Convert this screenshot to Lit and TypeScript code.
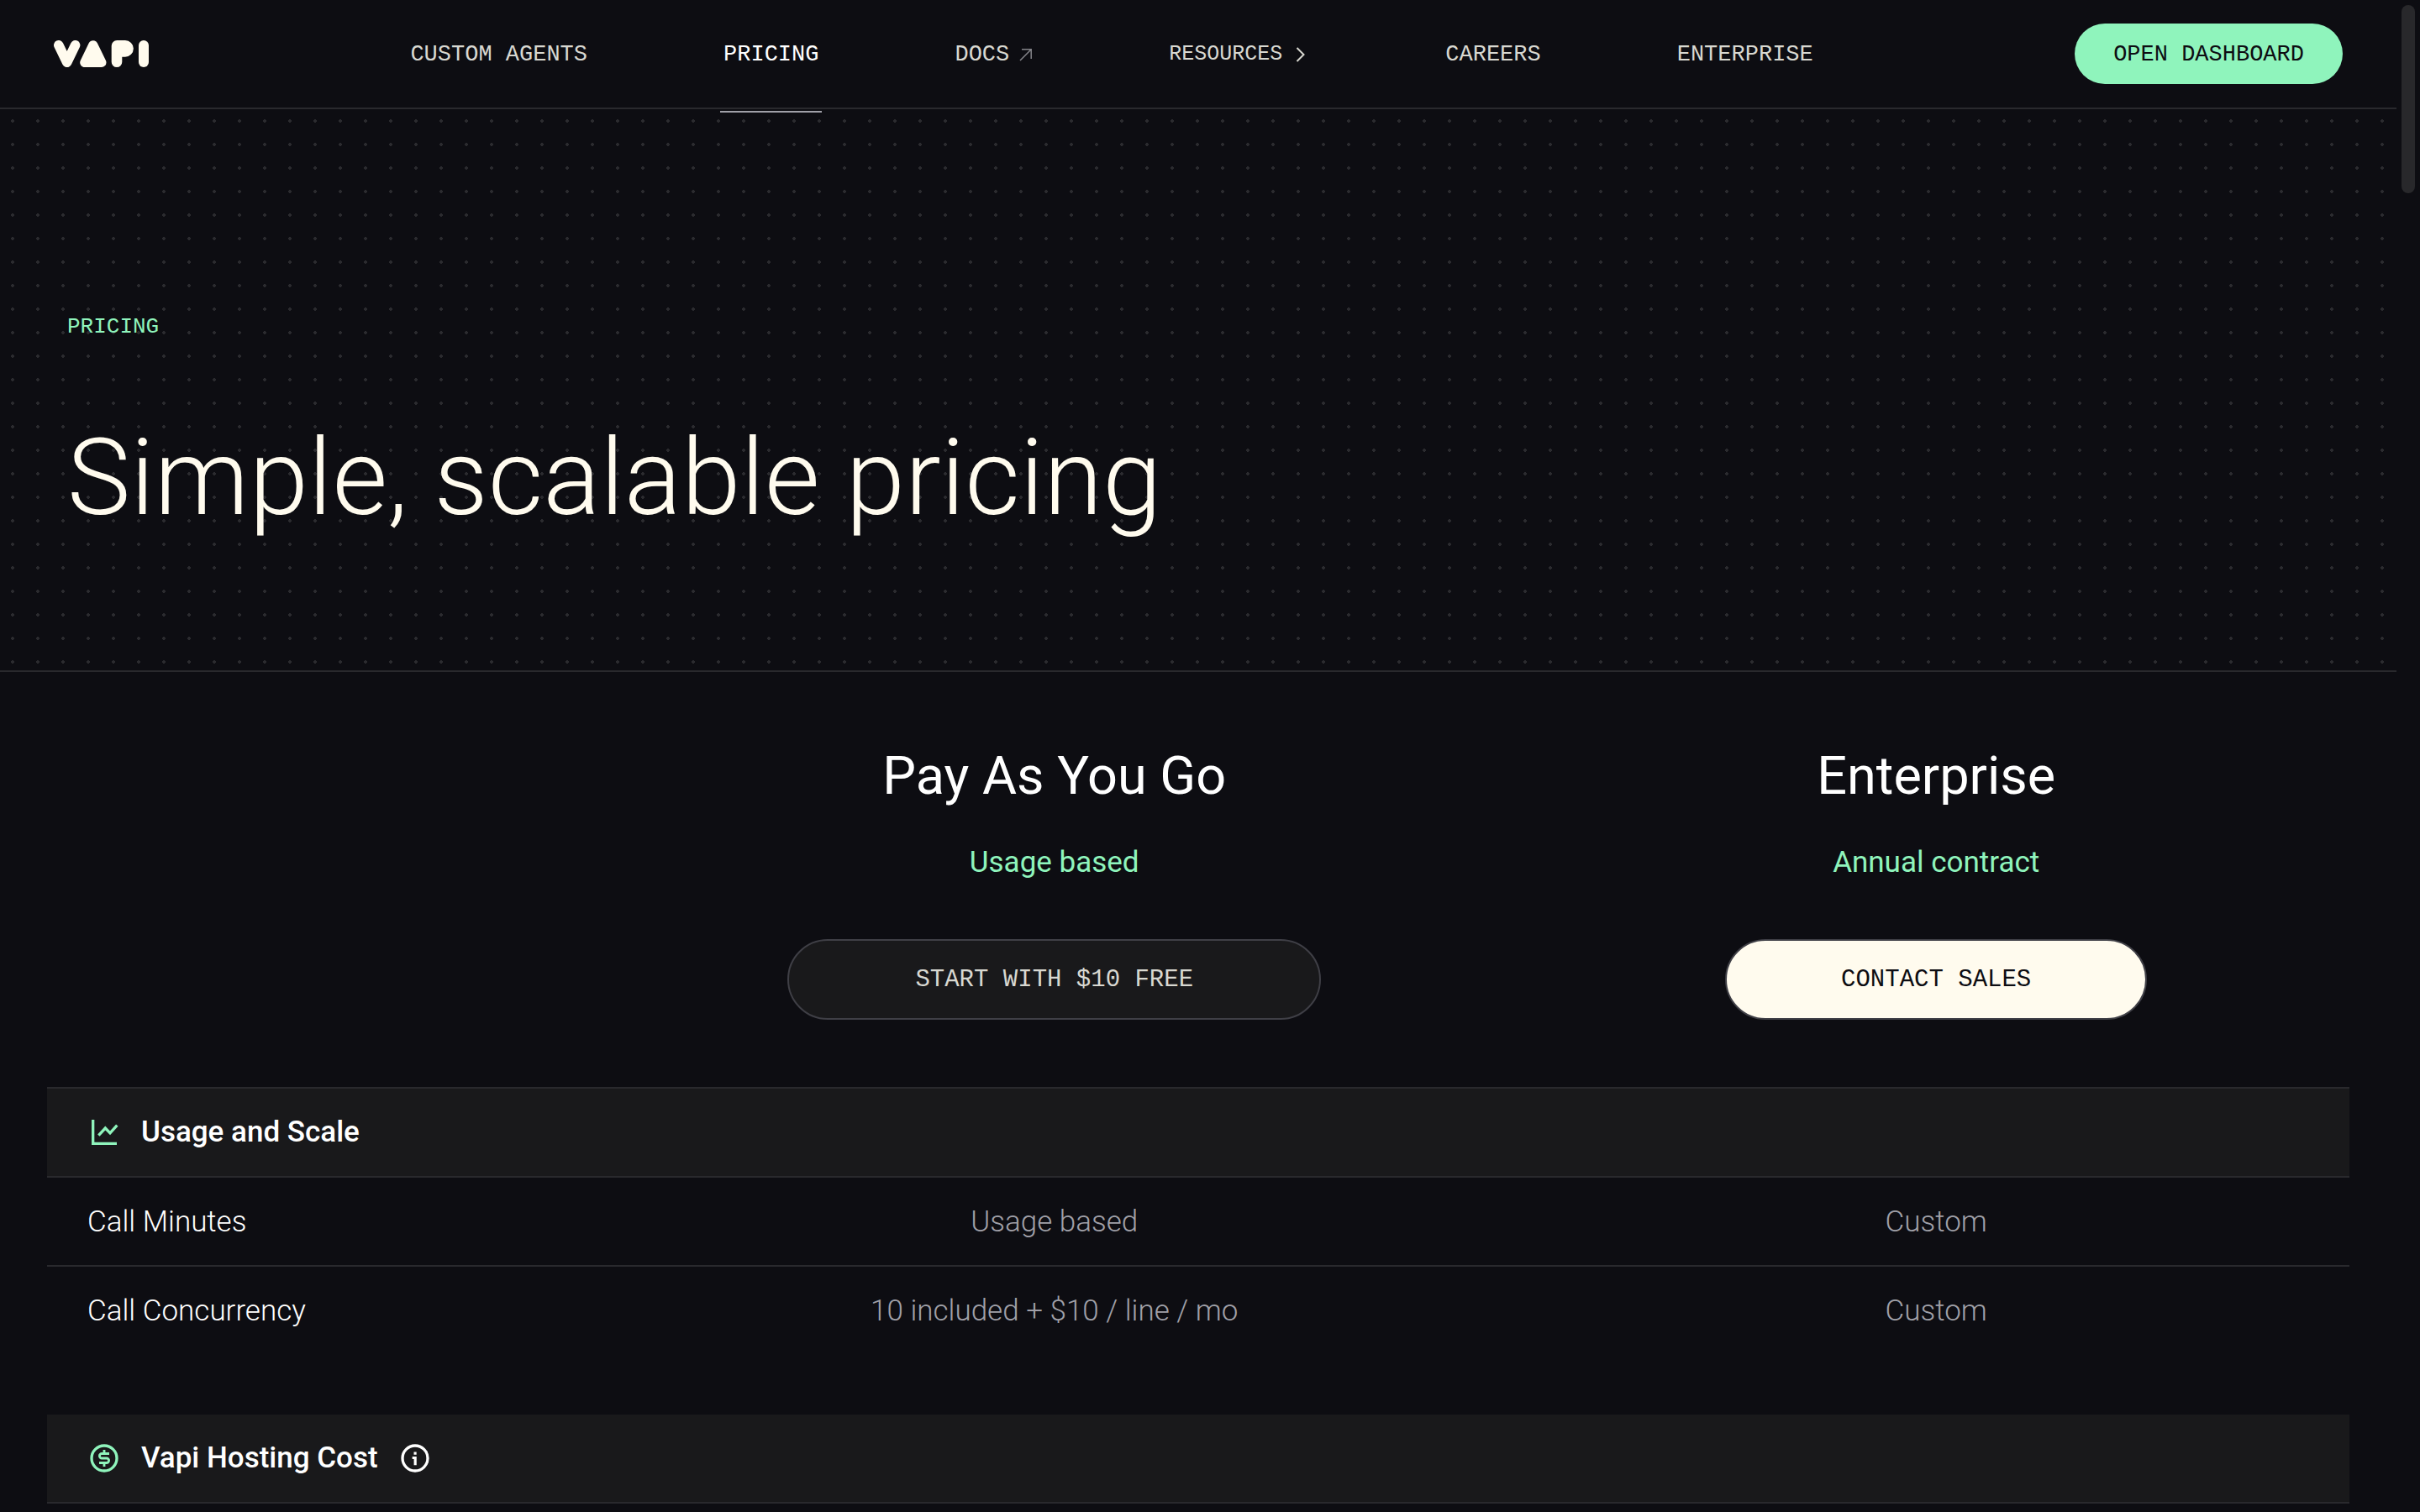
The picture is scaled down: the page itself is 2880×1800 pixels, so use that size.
import { LitElement, html, svg, css, nothing, type TemplateResult } from "lit";
import { customElement, property } from "lit/decorators.js";
import { classMap } from "lit/directives/class-map.js";

const tokens = css`
  :host {
    --bg: #0d0d12;
    --surface: #19191b;
    --line: #29292d;
    --line-strong: #3f3f46;
    --dot: #2b2b2f;
    --cream: #fffbee;
    --soft: #d8d8d1;
    --muted: #a0a0a8;
    --mint: #8ff4bc;
    --sans: Roboto, "Open Sans", "Liberation Sans", sans-serif;
    --mono: "Liberation Mono", "DejaVu Sans Mono", monospace;
  }
  * {
    box-sizing: border-box;
  }
  a {
    color: inherit;
    text-decoration: none;
  }
  button {
    margin: 0;
    padding: 0;
    border: 0;
    background: none;
    color: inherit;
    font: inherit;
    cursor: pointer;
  }
  svg {
    display: block;
    flex: none;
  }
`;

interface NavItem {
  label: string;
  href?: string;
  active?: boolean;
  icon?: TemplateResult;
}

const externalIcon = html`<svg class="external" width="16" height="16" viewBox="0 0 16 16" fill="none" stroke="currentColor" stroke-width="1.5" aria-hidden="true">
  <path d="M1 15L14 2M3 1.8h11.2V13" />
</svg>`;

const chevronIcon = html`<svg width="20" height="20" viewBox="0 0 20 20" fill="none" stroke="currentColor" stroke-width="2" aria-hidden="true">
  <path d="M5.500 2l8 8L5.500 18" />
</svg>`;

const navItems: NavItem[] = [
  { label: "CUSTOM AGENTS", href: "#custom-agents" },
  { label: "PRICING", href: "#pricing", active: true },
  { label: "DOCS", href: "#docs", icon: externalIcon },
  { label: "RESOURCES", icon: chevronIcon },
  { label: "CAREERS", href: "#careers" },
  { label: "ENTERPRISE", href: "#enterprise" },
];

@customElement("site-header")
class SiteHeader extends LitElement {
  static styles = [
    tokens,
    css`
      :host {
        display: block;
      }
      .bar {
        display: flex;
        align-items: center;
        justify-content: space-between;
        padding: 0 64px;
        border-bottom: 2px solid var(--line);
        font-family: var(--mono);
        font-size: 27px;
        line-height: 32px;
      }
      .logo {
        color: var(--cream);
      }
      .nav {
        display: flex;
        gap: 154px;
      }
      .item {
        position: relative;
        display: flex;
        align-items: center;
        gap: 12px;
        height: 128px;
        padding: 2px 4px 0;
        color: var(--soft);
        white-space: nowrap;
      }
      .menu {
        font-size: 25px;
      }
      .active {
        color: #fff;
      }
      .active::after {
        content: "";
        position: absolute;
        left: 0;
        right: 0;
        bottom: -6px;
        height: 2px;
        background: var(--muted);
      }
      .external {
        color: #85858a;
      }
      .cta {
        padding: 21px 46px 19px;
        border-radius: 36px;
        background: var(--mint);
        color: var(--bg);
        white-space: nowrap;
      }
    `,
  ];

  private item(item: NavItem) {
    return item.href
      ? html`<a class=${classMap({ item: true, active: !!item.active })} href=${item.href}>${item.label}${item.icon ?? nothing}</a>`
      : html`<button class="item menu" type="button" aria-haspopup="true">${item.label}${item.icon ?? nothing}</button>`;
  }

  render() {
    return html`<header class="bar">
      <a class="logo" href="#home" aria-label="Vapi">
        <svg width="113" height="32" viewBox="0 0 113 32" fill="currentColor" stroke="currentColor" stroke-linejoin="round" stroke-linecap="round" aria-hidden="true">
          <path d="M5.800 5.800L15.700 26.200L25.600 5.800" fill="none" stroke-width="11.600" />
          <path d="M46.800 5.800L36.800 26.400H56.900Z" stroke-width="11.200" />
          <path d="M75.200 0H85A9.850 9.850 0 0 1 85 19.700H81.300V25.700A6.300 6.300 0 0 1 68.700 25.700V6.500A6.500 6.500 0 0 1 75.200 0Z" stroke="none" />
          <rect x="101" y="0" width="12" height="32" rx="6" stroke="none" />
        </svg>
      </a>
      <nav class="nav" aria-label="Main">${navItems.map((i) => this.item(i))}</nav>
      <a class="cta" href="#dashboard">OPEN DASHBOARD</a>
    </header>`;
  }
}

@customElement("page-hero")
class PageHero extends LitElement {
  @property() label = "";
  @property() heading = "";

  static styles = [
    tokens,
    css`
      :host {
        display: block;
      }
      .hero {
        padding: 243px 80px 161px;
        border-bottom: 2px solid var(--line);
        background-image: radial-gradient(circle at 15px 14px, var(--dot) 2px, transparent 2px);
        background-size: 30px 28px;
      }
      .label {
        margin: 0 0 96px;
        color: var(--mint);
        font: 26px/32px var(--mono);
      }
      .heading {
        margin: 0;
        color: var(--cream);
        font: 300 127px/136px var(--sans);
      }
    `,
  ];

  render() {
    return html`<section class="hero">
      <p class="label">${this.label}</p>
      <h1 class="heading">${this.heading}</h1>
    </section>`;
  }
}

const icon = (body: unknown) => html`<svg width="40" height="40" viewBox="0 0 24 24" fill="none" stroke="currentColor" stroke-width="2" aria-hidden="true">${body}</svg>`;

const chartIcon = icon(svg`<path d="M4 3v17h17M8 14.200L12.800 9l3.400 3.500L21.200 7" />`);

const dollarIcon = icon(svg`<circle cx="12" cy="12" r="9" />
  <path stroke-width="1.700" d="M15.600 8.700H10.300a1.650 1.650 0 0 0 0 3.300h3.400a1.650 1.650 0 0 1 0 3.300H8.400M12 6v2.700M12 15.300V18" />`);

const infoIcon = icon(svg`<circle cx="12" cy="12" r="9" />
  <path stroke-width="1.900" d="M10 11.700h2.100V17M11.100 8.500h1.900" />`);

interface Plan {
  name: string;
  billing: string;
  action: string;
  href: string;
  primary: boolean;
}

interface Group {
  title: string;
  icon: TemplateResult;
  info?: boolean;
  rows: string[][];
}

const plans: Plan[] = [
  { name: "Pay As You Go", billing: "Usage based", action: "START WITH $10 FREE", href: "#start", primary: false },
  { name: "Enterprise", billing: "Annual contract", action: "CONTACT SALES", href: "#sales", primary: true },
];

const groups: Group[] = [
  {
    title: "Usage and Scale",
    icon: chartIcon,
    rows: [
      ["Call Minutes", "Usage based", "Custom"],
      ["Call Concurrency", "10 included + $10 / line / mo", "Custom"],
    ],
  },
  { title: "Vapi Hosting Cost", icon: dollarIcon, info: true, rows: [] },
];

@customElement("pricing-table")
class PricingTable extends LitElement {
  static styles = [
    tokens,
    css`
      :host {
        display: block;
        padding: 0 56px;
      }
      .table {
        width: 100%;
        table-layout: fixed;
        border-collapse: separate;
        border-spacing: 0;
        color: #fff;
        font: 300 35px/40px var(--sans);
      }
      .col-feature {
        width: 23.400%;
      }
      .col-usage {
        width: 40.700%;
      }
      .plan {
        padding: 88px 0 80px;
        font-weight: 400;
        text-align: center;
        vertical-align: top;
      }
      .name {
        display: block;
        margin-bottom: 47px;
        font-size: 63px;
        line-height: 72px;
      }
      .billing {
        display: block;
        margin-bottom: 71px;
        color: var(--mint);
      }
      .action {
        display: inline-block;
        padding: 31px 150px 29px;
        border: 2px solid var(--line-strong);
        border-radius: 48px;
        background: var(--surface);
        color: var(--soft);
        font: 29px/32px var(--mono);
        white-space: nowrap;
        vertical-align: top;
      }
      .primary {
        padding: 31px 136px 29px;
        background: var(--cream);
        color: var(--bg);
      }
      .cell {
        padding: 33px 48px 31px;
        border-bottom: 2px solid var(--line);
        font-weight: 300;
        text-align: left;
      }
      .value {
        color: var(--muted);
        text-align: center;
      }
      .last .cell {
        padding-bottom: 103px;
        border-bottom: 0;
      }
      .group {
        padding: 32px 48px;
        background: var(--surface);
        font-weight: 500;
      }
      .first .group {
        border-top: 2px solid var(--line);
      }
      .title {
        display: flex;
        align-items: center;
        gap: 24px;
      }
      .mark {
        color: var(--mint);
      }
    `,
  ];

  private group(group: Group, index: number) {
    return html`<tbody class=${index === 0 ? "first" : ""}>
      <tr>
        <th class="cell group" colspan="3" scope="rowgroup">
          <span class="title">
            <span class="mark">${group.icon}</span>${group.title}
            ${group.info ? html`<button type="button" aria-label="More information">${infoIcon}</button>` : nothing}
          </span>
        </th>
      </tr>
      ${group.rows.map(
        ([name, ...values], i) => html`<tr class=${i === group.rows.length - 1 ? "last" : ""}>
          <th class="cell" scope="row">${name}</th>
          ${values.map((v) => html`<td class="cell value">${v}</td>`)}
        </tr>`,
      )}
    </tbody>`;
  }

  render() {
    return html`<table class="table">
      <colgroup>
        <col class="col-feature" />
        <col class="col-usage" />
        <col />
      </colgroup>
      <thead>
        <tr>
          <td></td>
          ${plans.map(
            (p) => html`<th class="plan" scope="col">
              <span class="name">${p.name}</span>
              <span class="billing">${p.billing}</span>
              <a class=${classMap({ action: true, primary: p.primary })} href=${p.href}>${p.action}</a>
            </th>`,
          )}
        </tr>
      </thead>
      ${groups.map((g, i) => this.group(g, i))}
    </table>`;
  }
}

@customElement("app-root")
class AppRoot extends LitElement {
  static styles = [
    tokens,
    css`
      :host {
        position: relative;
        display: block;
        min-height: 100vh;
        padding-right: 28px;
        box-sizing: border-box;
        background: var(--bg);
      }
      .thumb {
        position: absolute;
        top: 6px;
        right: 6px;
        width: 16px;
        height: 224px;
        border-radius: 8px;
        background: #28282b;
      }
    `,
  ];

  render() {
    return html`
      <site-header></site-header>
      <main>
        <page-hero label="PRICING" heading="Simple, scalable pricing"></page-hero>
        <pricing-table></pricing-table>
      </main>
      <div class="thumb"></div>
    `;
  }
}
